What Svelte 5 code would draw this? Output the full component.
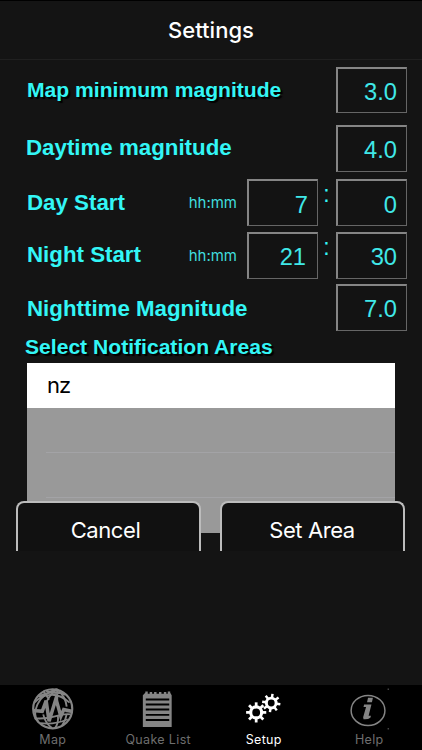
<script lang="ts">
  let mapMagnitude = "3.0";
  let dayMagnitude = "4.0";
  let dayHour = "7";
  let dayMinute = "0";
  let nightHour = "21";
  let nightMinute = "30";
  let nightMagnitude = "7.0";

  let areas = ["nz"];
  let activeTab = "Setup";

  const tabs = ["Map", "Quake List", "Setup", "Help"];
  const teeth = [0, 45, 90, 135, 180, 225, 270, 315];
</script>

<div class="screen">
  <header>
    <h1>Settings</h1>
  </header>

  <main>
    <div class="row row-map">
      <label class="shadow" for="map-mag">Map minimum magnitude</label>
      <input id="map-mag" bind:value={mapMagnitude} />
    </div>
    <div class="row row-daymag">
      <label for="day-mag">Daytime magnitude</label>
      <input id="day-mag" bind:value={dayMagnitude} />
    </div>
    <div class="row row-day">
      <label for="day-hour">Day Start</label>
      <span class="hint">hh:mm</span>
      <input id="day-hour" bind:value={dayHour} />
      <span class="colon">:</span>
      <input bind:value={dayMinute} />
    </div>
    <div class="row row-night">
      <label for="night-hour">Night Start</label>
      <span class="hint">hh:mm</span>
      <input id="night-hour" class="hour" bind:value={nightHour} />
      <span class="colon">:</span>
      <input bind:value={nightMinute} />
    </div>
    <div class="row row-nightmag">
      <label for="night-mag">Nighttime Magnitude</label>
      <input id="night-mag" bind:value={nightMagnitude} />
    </div>

    <h2>Select Notification Areas</h2>
    <div class="areas">
      {#each areas as area}
        <div class="area">{area}</div>
      {/each}
      <div class="empty"></div>
      <div class="empty"></div>
    </div>
    <div class="buttons">
      <button>Cancel</button>
      <button>Set Area</button>
    </div>
  </main>

  <nav>
    {#each tabs as tab}
      <button
        class="tab"
        class:active={activeTab === tab}
        on:click={() => (activeTab = tab)}
      >
        <svg width="50" height="44" viewBox="0 0 50 44">
          {#if tab === "Map"}
            <g fill="none" stroke="currentColor" stroke-width="1.9">
              <circle cx="24.7" cy="22.3" r="20" stroke-width="2.2" />
              <path d="M10 10Q25 2 38 8M6 16Q12 9 22 8T42 16M5 24H14M38 25H45M6 32Q17 33 27 30T43 28M12 37Q26 39 40 33" />
              <path d="M29 2Q14 7 9 18T10 36M29 2Q20 9 17 19M15 28Q17 37 24 42M29 2Q30 11 29 18M30 29Q31 37 27 42M29 2Q38 10 39 20M39 28Q38 34 34 40M18 4Q25 7 36 6M15 4Q18 8 21 13" />
              <path d="M5 24L14 25L18 14L21 35L28 12L33 30L36 23L45 25" stroke-width="3.6" />
            </g>
          {:else if tab === "Quake List"}
            <path
              fill="currentColor"
              d="M9.5 8.5L12 6V4.5H14.5V7H16.5V5H19V7H21V5H23.5V7H26V5H28.5V7H31V5H33.5V7H35V4.5H37.5V6L39 8.5V41H9.5Z"
            />
            <path
              stroke="#000"
              stroke-width="2"
              d="M12.5 12.7H36.5M12.5 18H36.5M12.5 23H36.5M12.5 28.5H36.5M12.5 33.8H36.5"
            />
          {:else if tab === "Setup"}
            <g fill="none" stroke="currentColor">
              <g transform="translate(17 26)">
                <circle r="5.6" stroke-width="3.2" />
                {#each teeth as angle}
                  <path d="M0 -6V-10.3" stroke-width="2.8" transform="rotate({angle})" />
                {/each}
              </g>
              <g transform="translate(32.4 16.4)">
                <circle r="5" stroke-width="3" />
                {#each teeth as angle}
                  <path d="M0 -5.5V-9.4" stroke-width="2.5" transform="rotate({angle + 8})" />
                {/each}
              </g>
            </g>
          {:else}
            <ellipse
              cx="24"
              cy="24"
              rx="17.3"
              ry="15.4"
              fill="none"
              stroke="currentColor"
              stroke-width="1.5"
            />
            <path
              fill="currentColor"
              d="M24 11H29L28 15.6H23ZM20 18H27.5L24.6 29.5H27L26.4 31.5Q24 33.4 19.4 33L19 31L22 20.5H19.4Z"
            />
            <path fill="#444" d="M44 1.5h1.5v1.5h-1.5zM44 42h1.5v1.5h-1.5z" />
          {/if}
        </svg>
        <span>{tab}</span>
      </button>
    {/each}
  </nav>
</div>

<style>
  :global(body) {
    margin: 0;
    background: #141414;
  }
  .screen {
    display: flex;
    flex-direction: column;
    width: 422px;
    height: 750px;
    overflow: hidden;
    background: #141414;
    font-family: Inter, "Liberation Sans", sans-serif;
  }
  header {
    box-sizing: border-box;
    height: 60px;
    border-top: 1px solid #000;
    border-bottom: 1px solid #202020;
  }
  h1 {
    margin: 0;
    color: #fff;
    font-size: 22px;
    font-weight: 550;
    line-height: 58px;
    text-align: center;
  }
  main {
    flex: 1;
    padding: 7px 15px 0 27px;
  }
  .row {
    display: flex;
    align-items: center;
    height: 47px;
  }
  .row-map {
    height: 46px;
    margin-bottom: 12px;
  }
  .row-daymag {
    margin-bottom: 7px;
  }
  .row-day {
    margin-bottom: 6px;
  }
  .row-night {
    margin-bottom: 5px;
  }
  label {
    flex: 1;
    color: #33f6f6;
    font: bold 22.3px "Liberation Sans", Arial, sans-serif;
    white-space: nowrap;
  }
  .row-daymag label {
    margin-left: -1px;
    padding-bottom: 2px;
  }
  .row-night label {
    padding-bottom: 2px;
  }
  .row-nightmag label {
    padding-top: 2px;
  }
  .shadow,
  h2 {
    font-size: 21.1px;
    text-shadow: 2px 2px 1px #000;
  }
  input {
    box-sizing: border-box;
    width: 71px;
    height: 100%;
    padding: 4px 9px 0 0;
    border: 1px solid #666;
    border-top: 2px solid #858585;
    border-left: 2px solid #858585;
    border-radius: 0;
    outline: none;
    background: #131313;
    color: #40e8e8;
    font: 23.7px "Liberation Sans", Arial, sans-serif;
    text-align: right;
  }
  .row-map input {
    padding-top: 3px;
  }
  .row-daymag input,
  .row-night input {
    padding-top: 2px;
  }
  .row-nightmag input {
    padding-top: 3px;
  }
  .row-night .hour {
    padding-right: 11px;
  }
  .hint {
    margin-right: 10px;
    color: #40dede;
    font-size: 15px;
  }
  .colon {
    width: 18px;
    margin-top: -16px;
    color: #33f6f6;
    font: 23px "Liberation Sans", Arial, sans-serif;
    text-align: center;
    text-indent: -1px;
  }
  h2 {
    margin: 0 0 0 -2px;
    height: 32px;
    color: #33f6f6;
    font-family: "Liberation Sans", Arial, sans-serif;
    font-weight: bold;
    line-height: 32px;
  }
  .areas {
    width: 368px;
    height: 170px;
    background: #999;
  }
  .area {
    height: 45px;
    padding-left: 20px;
    background: #fff;
    color: #000;
    font-size: 22px;
    letter-spacing: -1px;
    line-height: 45px;
  }
  .empty {
    box-sizing: border-box;
    height: 45px;
    margin-left: 19px;
    border-bottom: 1px solid #a3a3a6;
  }
  .buttons {
    position: relative;
    display: flex;
    gap: 19px;
    margin: -32px 0 0 -11px;
  }
  .buttons button {
    box-sizing: border-box;
    width: 185px;
    height: 50px;
    padding: 5px 6px 0 0;
    border: 2px solid #bcbcbc;
    border-bottom: 0;
    border-radius: 8px 8px 0 0;
    background: #111;
    color: #fff;
    font: 22px Inter, "Liberation Sans", sans-serif;
    letter-spacing: -0.4px;
  }
  .buttons button:last-child {
    padding-right: 1px;
  }
  nav {
    display: flex;
    height: 65px;
    background: #000;
  }
  .tab {
    display: flex;
    flex: 1;
    flex-direction: column;
    align-items: center;
    padding: 2px 0 0;
    border: 0;
    background: none;
    color: #6e6e6e;
    font: 12.5px Inter, "Liberation Sans", sans-serif;
    letter-spacing: 0.35px;
  }
  .tab span {
    line-height: 20px;
  }
  .tab svg {
    color: #858585;
  }
  .tab.active,
  .tab.active svg {
    color: #fff;
  }
</style>
